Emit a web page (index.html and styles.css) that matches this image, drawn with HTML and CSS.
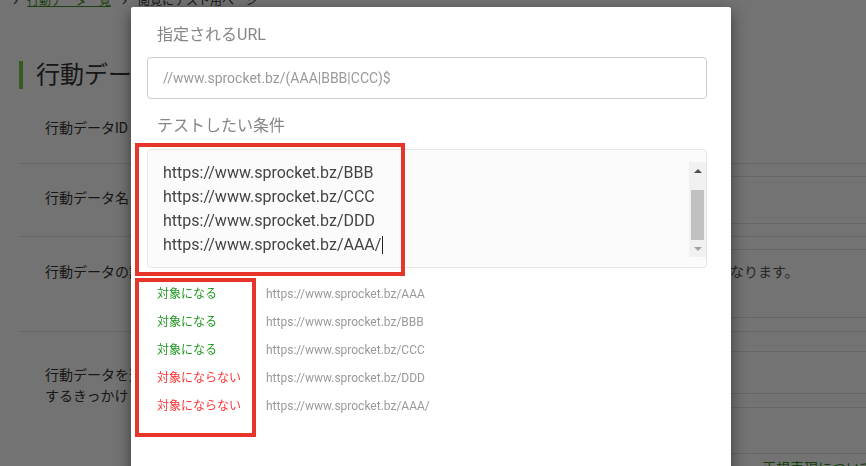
FILE: index.html
```html
<!DOCTYPE html>
<html lang="ja">
<head>
    <meta charset="UTF-8">
    <meta name="viewport" content="width=device-width, initial-scale=1.0">
    <title>行動データ詳細</title>
    <link rel="stylesheet" href="styles.css">
</head>
<body>
    <div class="page">
        <div class="breadcrumb">
            <svg class="crumb-sep" width="5" height="8" viewBox="0 0 5 8"><polyline points="1,1 4,4 1,7" fill="none" stroke="#555" stroke-width="1.2"/></svg>
            <a class="crumb-link" href="#">行動データ一覧</a>
            <svg class="crumb-sep" width="5" height="8" viewBox="0 0 5 8"><polyline points="1,1 4,4 1,7" fill="none" stroke="#555" stroke-width="1.2"/></svg>
            <span class="crumb-current">閲覧にテスト用ページ</span>
        </div>

        <h1 class="page-title">行動データ詳細</h1>

        <div class="detail">
            <div class="detail-row row-id">
                <div class="detail-label">行動データID</div>
                <div class="detail-value">1024</div>
            </div>
            <div class="detail-row row-name">
                <div class="detail-label">行動データ名</div>
                <div class="detail-value">
                    <div class="field field-input">閲覧にテスト用ページ</div>
                </div>
            </div>
            <div class="detail-row row-desc">
                <div class="detail-label">行動データの説明</div>
                <div class="detail-value">
                    <div class="field field-text">設定した条件に一致するページを閲覧したユーザーが計測対象となります。</div>
                </div>
            </div>
            <div class="detail-row row-trigger">
                <div class="detail-label">行動データを送信<br>するきっかけ</div>
                <div class="detail-value">
                    <div class="field field-select">ページを閲覧した時</div>
                    <div class="field field-url">//www.sprocket.bz/(AAA|BBB|CCC)$</div>
                    <a class="help-link" href="#">正規表現について</a>
                </div>
            </div>
        </div>
    </div>

    <div class="backdrop"></div>

    <div class="modal">
        <div class="modal-label label-url">指定されるURL</div>
        <div class="url-input">//www.sprocket.bz/(AAA|BBB|CCC)$</div>

        <div class="modal-label label-test">テストしたい条件</div>
        <div class="test-area">
            <div class="test-lines">
                <div class="test-line">https://www.sprocket.bz/AAA</div>
                <div class="test-line">https://www.sprocket.bz/BBB</div>
                <div class="test-line">https://www.sprocket.bz/CCC</div>
                <div class="test-line">https://www.sprocket.bz/DDD</div>
                <div class="test-line">https://www.sprocket.bz/AAA/<span class="caret"></span></div>
            </div>
            <div class="scrollbar">
                <div class="scroll-btn"><span class="arrow-up"></span></div>
                <div class="scroll-track"><div class="scroll-thumb"></div></div>
                <div class="scroll-btn"><span class="arrow-down"></span></div>
            </div>
        </div>

        <div class="results">
            <div class="result-row">
                <span class="result-status match">対象になる</span>
                <span class="result-url">https://www.sprocket.bz/AAA</span>
            </div>
            <div class="result-row">
                <span class="result-status match">対象になる</span>
                <span class="result-url">https://www.sprocket.bz/BBB</span>
            </div>
            <div class="result-row">
                <span class="result-status match">対象になる</span>
                <span class="result-url">https://www.sprocket.bz/CCC</span>
            </div>
            <div class="result-row">
                <span class="result-status no-match">対象にならない</span>
                <span class="result-url">https://www.sprocket.bz/DDD</span>
            </div>
            <div class="result-row">
                <span class="result-status no-match">対象にならない</span>
                <span class="result-url">https://www.sprocket.bz/AAA/</span>
            </div>
        </div>

        <div class="mark mark-input"></div>
        <div class="mark mark-result"></div>
    </div>
</body>
</html>
```

FILE: styles.css
```css
html, body {
    overflow: hidden;
}

body {
    margin: 0;
    font-family: Roboto, "Noto Sans CJK JP", sans-serif;
    color: #333;
    background: #fff;
}

.page {
    width: 940px;
}

/* breadcrumb (scrolled partly out of view) */
.breadcrumb {
    display: flex;
    align-items: center;
    gap: 9px;
    margin-top: -7px;
    padding-left: 13px;
    font-size: 12px;
    line-height: 16px;
}

.crumb-link {
    color: #3f8f22;
    text-decoration: underline;
    margin-right: 2px;
}

.crumb-current {
    margin-left: 2px;
}

.page-title {
    margin: 52px 0 0 19px;
    padding-left: 13px;
    border-left: 4px solid #7ac94a;
    font-size: 24px;
    font-weight: normal;
    line-height: 28px;
}

.detail {
    margin-left: 19px;
}

.detail-row {
    display: flex;
    border-bottom: 1px solid #e5e5e5;
    font-size: 14px;
    line-height: 20px;
}

.detail-label {
    width: 255px;
    padding-left: 26px;
    flex-shrink: 0;
}

.detail-value {
    flex: 1;
}

.row-id {
    padding: 29px 0 25px;
}

.row-name {
    padding: 12px 0;
}

.row-name .detail-label {
    padding-top: 12px;
}

.row-desc {
    padding: 12px 0 13px;
}

.row-desc .detail-label {
    padding-top: 13px;
}

.row-trigger {
    padding-top: 19px;
    border-bottom: none;
}

.row-trigger .detail-label {
    padding-top: 14px;
    line-height: 21px;
}

.field {
    box-sizing: border-box;
    border: 1px solid #e5e5e5;
    border-radius: 4px;
    padding: 0 24px;
    color: #555;
}

.field-input {
    height: 48px;
    line-height: 46px;
}

.field-text {
    height: 69px;
    padding-top: 12px;
}

.field-select {
    height: 43px;
    line-height: 41px;
    margin-bottom: 13px;
}

.field-url {
    height: 47px;
    line-height: 45px;
}

.help-link {
    display: block;
    margin: 4px 0 0 462px;
    color: #2f8f1f;
    text-decoration: none;
}

.backdrop {
    position: fixed;
    inset: 0;
    background: rgba(0, 0, 0, 0.55);
}

/* modal */
.modal {
    position: absolute;
    left: 131px;
    top: 7px;
    width: 600px;
    height: 480px;
    box-sizing: border-box;
    padding: 16px 24px 0 16px;
    background: #fff;
    border-radius: 2px;
    box-shadow: 0 5px 15px rgba(0, 0, 0, 0.5);
}

.modal-label {
    padding-left: 10px;
    font-size: 16px;
    line-height: 24px;
    color: #868686;
}

.label-test {
    margin-top: 15px;
}

.url-input {
    box-sizing: border-box;
    height: 42px;
    margin-top: 10px;
    padding: 0 15px;
    border: 1px solid #ccc;
    border-radius: 4px;
    font-size: 14px;
    line-height: 40px;
    color: #9a9a9a;
}

.test-area {
    display: flex;
    margin-top: 11px;
    padding: 12px 0 10px 15px;
    border: 1px solid #e6e6e6;
    border-radius: 4px;
    background: #fbfbfb;
}

.test-lines {
    flex: 1;
    height: 95px;
    overflow: hidden;
    display: flex;
    flex-direction: column;
    justify-content: flex-end;
    font-size: 16px;
    line-height: 24px;
    color: #444;
}

.test-line {
    flex-shrink: 0;
}

.caret {
    display: inline-block;
    width: 1px;
    height: 18px;
    margin-left: 1px;
    background: #222;
    vertical-align: -4px;
}

.scrollbar {
    width: 17px;
    height: 95px;
    display: flex;
    flex-direction: column;
    background: #f1f1f1;
}

.scroll-btn {
    height: 17px;
    display: flex;
    align-items: center;
    justify-content: center;
}

.arrow-up {
    border-left: 4px solid transparent;
    border-right: 4px solid transparent;
    border-bottom: 4px solid #505050;
}

.arrow-down {
    border-left: 4px solid transparent;
    border-right: 4px solid transparent;
    border-top: 4px solid #a3a3a3;
}

.scroll-track {
    flex: 1;
    display: flex;
    flex-direction: column;
    justify-content: flex-end;
}

.scroll-thumb {
    height: 50px;
    margin: 0 2px;
    background: #c1c1c1;
}

.results {
    margin-top: 12px;
}

.result-row {
    display: flex;
    height: 28px;
    line-height: 28px;
    font-size: 12px;
}

.result-status {
    width: 109px;
    padding-left: 10px;
}

.match {
    color: #1f991f;
}

.no-match {
    color: #ff3333;
}

.result-url {
    color: #9a9a9a;
}

/* annotation frames drawn over the modal */
.mark {
    position: absolute;
    box-sizing: border-box;
    border: 4px solid #e8352a;
}

.mark-input {
    left: 4px;
    top: 136px;
    width: 270px;
    height: 133px;
}

.mark-result {
    left: 4px;
    top: 271px;
    width: 121px;
    height: 159px;
}
```
